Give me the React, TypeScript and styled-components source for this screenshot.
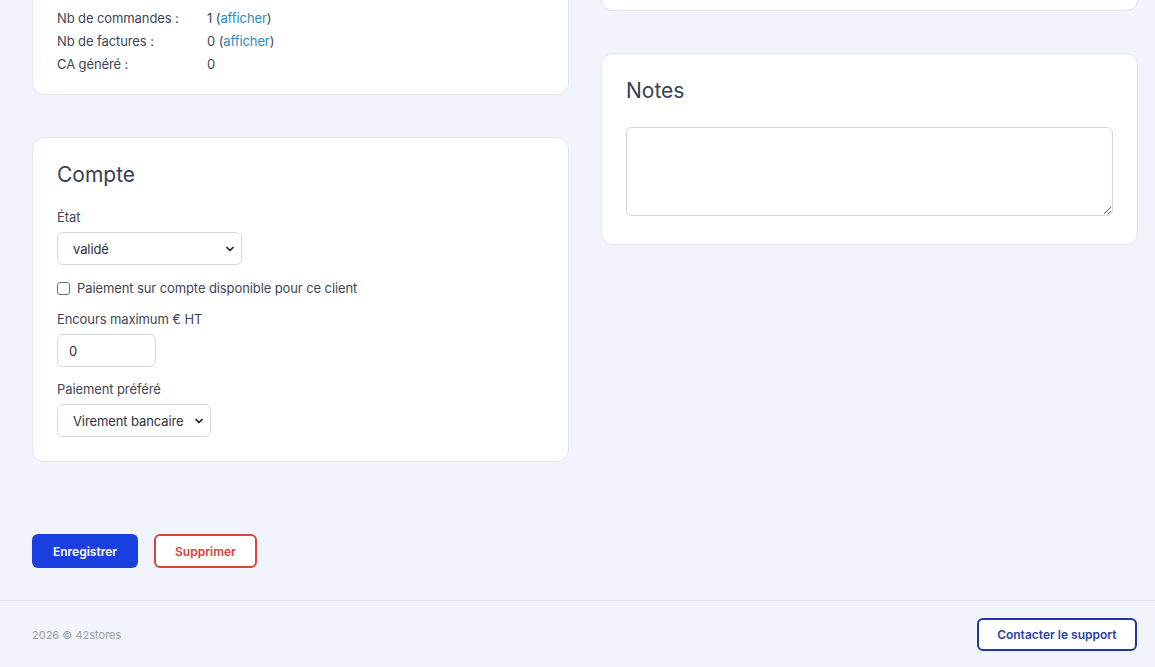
import React from "react";
import styled, { createGlobalStyle } from "styled-components";
import { ChevronDown } from "lucide-react";

const uiFont = `Inter, "Liberation Sans", Arial, sans-serif`;

const GlobalStyle = createGlobalStyle`
  html, body {
    margin: 0;
    padding: 0;
    background: #f1f4fa;
  }
  body {
    font-family: ${uiFont};
    color: #374151;
    -webkit-font-smoothing: antialiased;
  }
  * { box-sizing: border-box; }
`;

const Page = styled.div`
  display: flex;
  flex-direction: column;
  min-height: 100vh;
`;

const Main = styled.main`
  flex: 1;
  padding: 0 17px 32px 32px;
`;

const Columns = styled.div`
  display: grid;
  grid-template-columns: 1fr 1fr;
  column-gap: 32px;
  align-items: start;
`;

const Column = styled.div`
  display: flex;
  flex-direction: column;
  gap: 42px;
`;

const Card = styled.section<{ $cut?: boolean; $pb?: number }>`
  background: #ffffff;
  border: 1px solid #e2e6ee;
  border-radius: 12px;
  padding: 23px 24px ${(p) => p.$pb ?? 24}px 24px;
  ${(p) =>
    p.$cut &&
    `
    border-top: none;
    border-top-left-radius: 0;
    border-top-right-radius: 0;
  `}
`;

const StubCard = styled(Card)`
  height: 11px;
  padding: 0;
`;

const InfoCard = styled(Card)`
  padding-top: 7px;
  padding-bottom: 18px;
`;

const InfoList = styled.dl`
  margin: 0;
  display: grid;
  grid-template-columns: 150px 1fr;
  grid-auto-rows: 23px;
  font-size: 13px;
  line-height: 23px;
  letter-spacing: -0.1px;
  color: #3f4654;
`;

const Term = styled.dt`
  margin: 0;
`;

const Value = styled.dd`
  margin: 0;
`;

const Link = styled.a`
  color: #2a8ac4;
  text-decoration: none;
  cursor: pointer;
`;

const Title = styled.h2`
  margin: 0;
  font-size: 21px;
  line-height: 28px;
  font-weight: 400;
  color: #374151;
`;

const Field = styled.div<{ $mt: number }>`
  display: flex;
  flex-direction: column;
  align-items: flex-start;
  gap: 5px;
  margin-top: ${(p) => p.$mt}px;
`;

const Label = styled.label`
  font-size: 13px;
  line-height: 20px;
  letter-spacing: -0.1px;
  color: #3f4654;
`;

const SelectWrap = styled.div<{ $w: number }>`
  position: relative;
  width: ${(p) => p.$w}px;
`;

const Select = styled.select`
  appearance: none;
  -webkit-appearance: none;
  width: 100%;
  height: 33px;
  padding: 0 24px 0 15px;
  border: 1px solid #d6d9df;
  border-radius: 6px;
  background: #ffffff;
  font-family: ${uiFont};
  font-size: 13px;
  letter-spacing: -0.1px;
  color: #2d323b;
  outline: none;
`;

const Chevron = styled(ChevronDown)`
  position: absolute;
  right: 6px;
  top: 50%;
  transform: translateY(-50%);
  pointer-events: none;
  color: #1f2329;
`;

const CheckRow = styled.label<{ $mt: number }>`
  display: flex;
  align-items: center;
  gap: 7px;
  margin-top: ${(p) => p.$mt}px;
  font-size: 13px;
  line-height: 20px;
  letter-spacing: -0.1px;
  color: #3f4654;
`;

const Checkbox = styled.input`
  appearance: none;
  -webkit-appearance: none;
  margin: 0;
  width: 13px;
  height: 13px;
  border: 1px solid #6b6f76;
  border-radius: 3px;
  background: #ffffff;
`;

const TextInput = styled.input`
  width: 99px;
  height: 33px;
  padding: 0 11px;
  border: 1px solid #d6d9df;
  border-radius: 6px;
  background: #ffffff;
  font-family: ${uiFont};
  font-size: 13px;
  color: #2d323b;
  outline: none;
`;

const NotesArea = styled.textarea`
  display: block;
  width: 100%;
  height: 89px;
  margin-top: 22px;
  border: 1px solid #d4d7dd;
  border-radius: 6px;
  resize: vertical;
  font-family: ${uiFont};
  font-size: 13px;
  outline: none;
`;

const Actions = styled.div`
  display: flex;
  gap: 16px;
  margin-top: 72px;
`;

const Button = styled.button<{ $variant: "primary" | "danger" | "outline" }>`
  height: ${(p) => (p.$variant === "outline" ? 33 : 34)}px;
  padding: 0 ${(p) => (p.$variant === "primary" ? 21 : p.$variant === "danger" ? 19 : 18.5)}px;
  border-radius: 6px;
  font-family: Inter, "Liberation Sans", sans-serif;
  font-size: 12px;
  font-weight: 600;
  cursor: pointer;
  ${(p) =>
    p.$variant === "primary"
      ? `
    background: #1a3fdf;
    border: none;
    color: #ffffff;
  `
      : p.$variant === "danger"
      ? `
    background: #ffffff;
    border: 2px solid #d9453a;
    color: #d6413a;
  `
      : `
    background: #ffffff;
    border: 2px solid #2036a3;
    color: #2a3fae;
  `}
`;

const Footer = styled.footer`
  display: flex;
  align-items: center;
  justify-content: space-between;
  border-top: 1px solid #dfe3ea;
  padding: 17px 18px 16px 32px;
`;

const Copyright = styled.span`
  font-family: Inter, "Liberation Sans", sans-serif;
  font-size: 11px;
  color: #9a9fa8;
`;

export default function App() {
  return (
    <Page>
      <GlobalStyle />
      <Main>
        <Columns>
          <Column>
            <InfoCard $cut>
              <InfoList>
                <Term>Nb de commandes :</Term>
                <Value>
                  1 (<Link>afficher</Link>)
                </Value>
                <Term>Nb de factures :</Term>
                <Value>
                  0 (<Link>afficher</Link>)
                </Value>
                <Term>CA généré :</Term>
                <Value>0</Value>
              </InfoList>
            </InfoCard>

            <Card>
              <Title>Compte</Title>
              <Field $mt={18}>
                <Label htmlFor="etat">État</Label>
                <SelectWrap $w={185}>
                  <Select id="etat" defaultValue="valide">
                    <option value="valide">validé</option>
                    <option value="attente">en attente</option>
                    <option value="refuse">refusé</option>
                  </Select>
                  <Chevron size={12} strokeWidth={3.5} />
                </SelectWrap>
              </Field>
              <CheckRow $mt={13}>
                <Checkbox type="checkbox" />
                Paiement sur compte disponible pour ce client
              </CheckRow>
              <Field $mt={11}>
                <Label htmlFor="encours">Encours maximum € HT</Label>
                <TextInput id="encours" defaultValue="0" />
              </Field>
              <Field $mt={12}>
                <Label htmlFor="paiement">Paiement préféré</Label>
                <SelectWrap $w={154}>
                  <Select id="paiement" defaultValue="virement">
                    <option value="virement">Virement bancaire</option>
                    <option value="cb">Carte bancaire</option>
                    <option value="cheque">Chèque</option>
                  </Select>
                  <Chevron size={12} strokeWidth={3.5} />
                </SelectWrap>
              </Field>
            </Card>
          </Column>

          <Column>
            <StubCard $cut />
            <Card $pb={28}>
              <Title>Notes</Title>
              <NotesArea />
            </Card>
          </Column>
        </Columns>

        <Actions>
          <Button $variant="primary">Enregistrer</Button>
          <Button $variant="danger">Supprimer</Button>
        </Actions>
      </Main>

      <Footer>
        <Copyright>2026 © 42stores</Copyright>
        <Button $variant="outline">Contacter le support</Button>
      </Footer>
    </Page>
  );
}
